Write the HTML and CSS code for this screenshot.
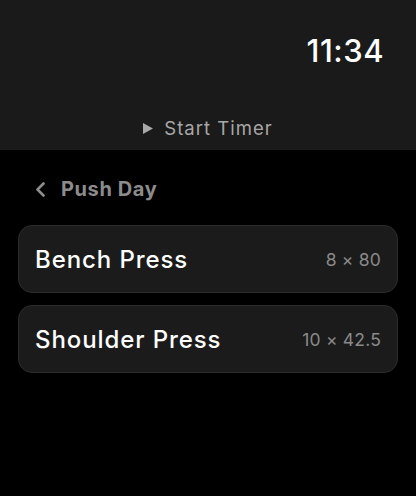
FILE: index.html
```html
<!DOCTYPE html>
<html>
<head>
<meta charset="utf-8">
<link rel="stylesheet" href="styles.css">
</head>
<body>
<div class="screen">
  <header class="top">
    <div class="clock">11:34</div>
    <div class="timer">
      <svg class="play" width="10" height="11" viewBox="0 0 10 11"><path d="M0 0 L10 5.5 L0 11 Z" fill="#a8a8a8"/></svg>
      <span>Start Timer</span>
    </div>
  </header>
  <main class="content">
    <div class="nav">
      <svg class="chev" width="11" height="15" viewBox="0 0 11 15"><path d="M8.5 1.5 L2.5 7.5 L8.5 13.5" fill="none" stroke="#8c8c8c" stroke-width="2.6" stroke-linecap="round" stroke-linejoin="round"/></svg>
      <span>Push Day</span>
    </div>
    <div class="list">
      <div class="card"><span class="name">Bench Press</span><span class="val">8 × 80</span></div>
      <div class="card"><span class="name">Shoulder Press</span><span class="val">10 × 42.5</span></div>
    </div>
  </main>
</div>
</body>
</html>
```
FILE: styles.css
```css
html, body { margin: 0; padding: 0; background: #000; }
body { font-family: Inter, "Noto Sans", sans-serif; width: 416px; height: 496px; overflow: hidden; }
.screen { display: flex; flex-direction: column; height: 496px; }
.top { background: #1a1a1a; height: 150px; box-sizing: border-box; display: flex; flex-direction: column; padding: 0 32px 0 0; }
.clock { color: #fff; font-size: 31px; font-weight: 500; text-align: right; margin-top: 32px; line-height: 38px; letter-spacing: 0.5px; }
.timer { display: flex; align-items: center; justify-content: center; gap: 11px; margin-top: 46px; padding-left: 32px; color: #a8a8a8; font-size: 18.5px; letter-spacing: 1px; line-height: 24px; }
.content { padding: 0 18px; }
.nav { display: flex; align-items: center; gap: 15px; margin-top: 27px; padding-left: 17px; color: #8c8c8c; font-size: 20px; font-weight: 700; letter-spacing: 0.6px; line-height: 24px; }
.list { display: flex; flex-direction: column; gap: 12px; margin-top: 24px; }
.card { display: flex; align-items: center; justify-content: space-between; height: 68px; box-sizing: border-box; border: 1px solid #2c2c2c; border-radius: 14px; background: #1b1b1b; padding: 0 16px 0 16px; }
.name { color: #fff; font-size: 24px; font-weight: 500; letter-spacing: 0.9px; }
.val { color: #8a8a8a; font-size: 17.5px; letter-spacing: 0.2px; }
```
